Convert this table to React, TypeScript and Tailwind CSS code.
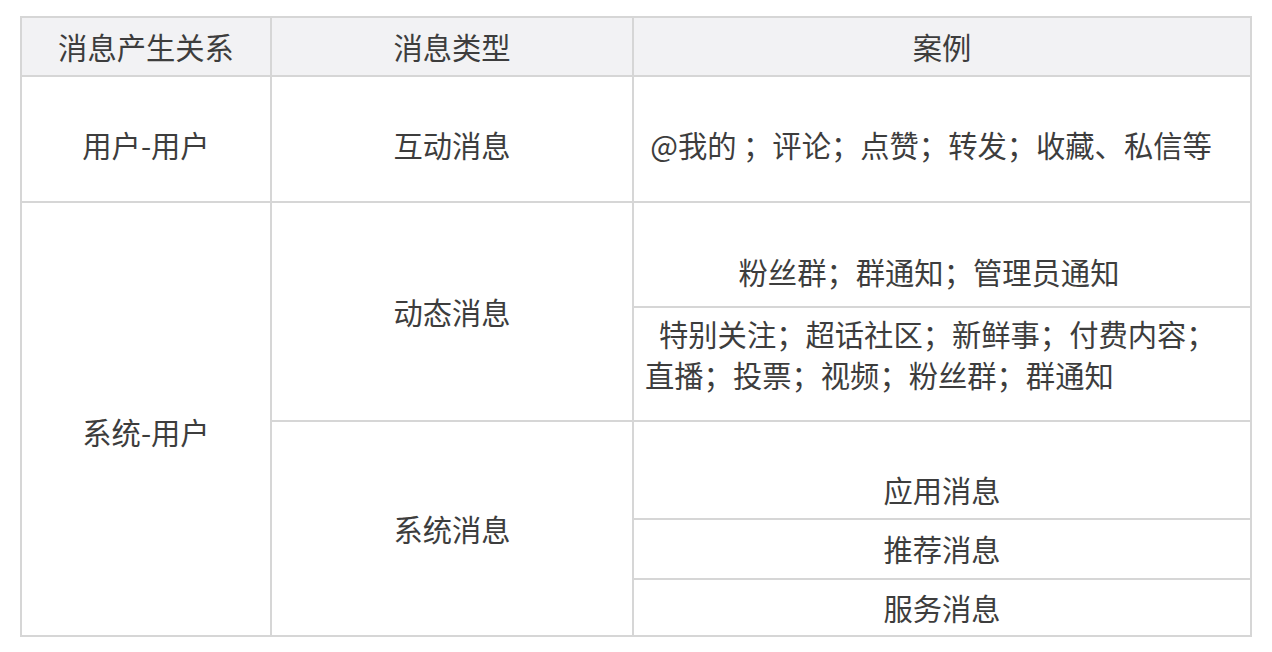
const cell = 'flex items-center justify-center text-center'

export default function App() {
  return (
    <div className="min-h-screen bg-white pl-[20px] pt-[16px] text-[29.3px] text-[#3d3d3d] [font-family:'Noto_Sans_CJK_SC','Noto_Sans',sans-serif]">
      <div className="grid w-[1232px] grid-cols-[250px_362px_616px] grid-rows-[59px_126px_105px_114px_98px_60px_55px] border-2 border-[#d6d6d6] leading-none">
        {/* header */}
        <div className={`${cell} border-r-2 border-b-2 border-[#d6d6d6] bg-[#f2f2f4]`}>消息产生关系</div>
        <div className={`${cell} border-r-2 border-b-2 border-[#d6d6d6] bg-[#f2f2f4]`}>消息类型</div>
        <div className={`${cell} border-b-2 border-[#d6d6d6] bg-[#f2f2f4]`}>案例</div>

        {/* 用户-用户 */}
        <div className={`${cell} border-r-2 border-b-2 border-[#d6d6d6] pt-[12px]`}>用户-用户</div>
        <div className={`${cell} border-r-2 border-b-2 border-[#d6d6d6] pt-[12px]`}>互动消息</div>
        <div className={`${cell} border-b-2 border-[#d6d6d6] pt-[12px] pr-[22px]`}>@我的 ；评论；点赞；转发；收藏、私信等</div>

        {/* 系统-用户 */}
        <div className={`${cell} row-span-5 border-r-2 border-[#d6d6d6] pt-[26px]`}>系统-用户</div>
        <div className={`${cell} row-span-2 border-r-2 border-b-2 border-[#d6d6d6]`}>动态消息</div>
        <div className={`${cell} border-b-2 border-[#d6d6d6] pt-[35px] pr-[26px]`}>粉丝群；群通知；管理员通知</div>
        <div className="flex flex-col border-b-2 border-[#d6d6d6] pl-[11px] pt-[5px] leading-[41px]">
          <span className="pl-[14px]">特别关注；超话社区；新鲜事；付费内容；</span>
          <span>直播；投票；视频；粉丝群；群通知</span>
        </div>

        <div className={`${cell} col-start-2 row-span-3 border-r-2 border-[#d6d6d6]`}>系统消息</div>
        <div className={`${cell} border-b-2 border-[#d6d6d6] pt-[40px]`}>应用消息</div>
        <div className={`${cell} border-b-2 border-[#d6d6d6]`}>推荐消息</div>
        <div className={cell}>服务消息</div>
      </div>
    </div>
  )
}
